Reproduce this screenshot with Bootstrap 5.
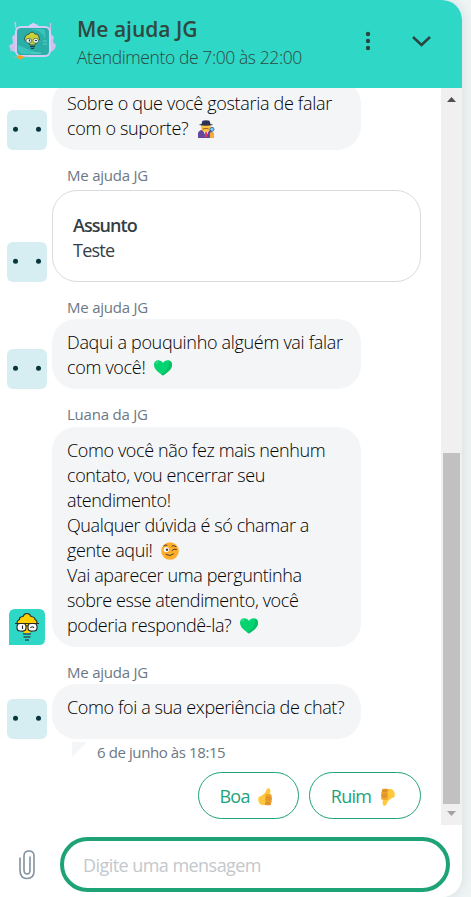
<!DOCTYPE html>
<html lang="pt-BR">
<head>
<meta charset="utf-8">
<meta name="viewport" content="width=device-width, initial-scale=1">
<title>Me ajuda JG</title>
<link href="https://cdn.jsdelivr.net/npm/bootstrap@5.3.0/dist/css/bootstrap.min.css" rel="stylesheet">
<style>
body{font-family:"Open Sans","Noto Sans",sans-serif;background:#eef3f4;height:897px;overflow:hidden;color:#000}
.chat-panel{width:462px;height:897px;background:#fff;border-radius:0 20px 20px 0;box-shadow:0 0 12px rgba(60,90,100,.13);overflow:hidden}
.chat-head{height:88px;background:#2fd7c6;color:#2f4941}
.head-logo{width:60px;height:52px;margin:14px 0 0 4px}
.head-text{width:225px;margin-left:13px;padding-top:14px}
.head-title{font-size:21px;line-height:31px;font-weight:600;letter-spacing:0;white-space:nowrap}
.head-sub{font-size:17.5px;line-height:24px;font-weight:350;letter-spacing:-.4px;white-space:nowrap}
.head-menu{width:20px;height:24px;margin:29px 0 0 56px}
.head-down{width:24px;height:24px;margin:29px 0 0 31px}
.chat-body{height:737px}
.thread{width:441px}
.msg-row{padding-left:7px;gap:5px}
.bot-face{width:40px;height:40px}
.agent-face{width:36px;height:36px;margin:0 2px 2px}
.bubble{width:309px;min-height:55px;padding:11px 0 9px 15px;border-radius:24px;background:#f4f5f7;font-size:18px;line-height:25px;font-weight:330;white-space:nowrap;letter-spacing:-.38px}
.first-row{margin-top:-8px}
.first-row .bubble,.wide-text{letter-spacing:-.32px}
.sender{padding:15px 0 2px 67px;font-size:15px;line-height:20px;font-weight:380;letter-spacing:-.22px;color:#6c7884;white-space:nowrap}
.subject{width:369px;height:92px;border:1px solid #d9dcdd;border-radius:25px;padding:22px 20px 0;margin-top:3px;font-size:18px;line-height:25px;font-weight:380;color:#343e45;letter-spacing:-.75px}
.subject .fw-semibold{letter-spacing:-.95px}
.gap-one{margin-top:1px}
.stamp{height:33px}
.stamp-tail{width:15px;height:15px;margin:3px 0 0 72px}
.stamp-time{margin:3px 0 0 10px;font-size:15px;line-height:20px;font-weight:380;color:#6c7884;letter-spacing:-.4px}
.emo{width:20px;height:20px;vertical-align:-4px;margin-left:3px}
.replies{gap:10px;padding-right:20px}
.reply-btn{height:47px;border:1px solid #1ea37a;border-radius:24px;color:#1ea37a;font-size:18px;font-weight:380;padding:2px 2px 0 0;letter-spacing:-.75px}
.reply-btn .emo{margin-left:2px}
.reply-a{width:101px}.reply-b{width:112px}
.track{width:21px;background:#f0f0f0}
.thumb{width:17px;height:351px;background:#c1c1c1;margin-left:2px}
.chat-foot{height:72px}
.clip{width:22px;height:34px;margin:23px 0 0 16px}
.msg-input{width:390px;height:55px;margin:12px 0 0 22px;border:4px solid #1ea377;border-radius:28px;padding:1px 19px 0;font-size:18px;letter-spacing:-.55px;outline:0;background:#fff}
.msg-input::placeholder{color:#c3c8cc;opacity:1}
</style>
<script src="https://cdn.jsdelivr.net/npm/bootstrap@5.3.0/dist/js/bootstrap.bundle.min.js"></script>
</head>
<body>
<svg class="d-none" aria-hidden="true">
  <symbol id="face" viewBox="0 0 40 40"><rect width="40" height="40" rx="6" fill="#d6edf1"/><circle cx="8.5" cy="19.3" r="2.5" fill="#07373c"/><circle cx="31.5" cy="19.3" r="2.5" fill="#07373c"/></symbol>
  <symbol id="heart" viewBox="0 0 20 20"><path d="M10 17.400C5 14.500 1 11 1 6.800C1 4 2.800 2.300 5.300 2.300C7.300 2.300 9 3.300 10 5C11 3.300 12.700 2.300 14.700 2.300C17.200 2.300 19 4 19 6.800C19 11 15 14.500 10 17.400Z" fill="#04d36f"/><path d="M15.500 2.400Q19 3.300 19 6.800C19 11 15 14.500 10 17.400L8 16.200C14 13 17.500 8 15.500 2.400Z" fill="#07bf67"/><path d="M3 5.500Q3.500 4 5 3.800" stroke="#3ee596" stroke-width="1.200" fill="none"/></symbol>
  <symbol id="thumb-up" viewBox="0 0 20 20"><path d="M8.300 7.500 10.700 2.500Q11.500 .8 13 1.300Q14.900 2 14.300 5.500L13.800 8.300H9Z" fill="#ffc83d"/><path d="M2.200 12Q2.200 9.500 5 9L9.700 5.500V18H6Q2.200 17 2.200 12Z" fill="#ffc83d"/><rect x="9" y="7.300" width="6.800" height="3.200" rx="1.500" fill="#f0a329"/><rect x="9" y="10" width="7" height="3.200" rx="1.500" fill="#e89a2c"/><rect x="9" y="12.700" width="6.800" height="3" rx="1.500" fill="#f0a329"/><rect x="8.800" y="15.300" width="6.300" height="3" rx="1.500" fill="#e29428"/><path d="M10 10.400H15.500M10 13H15.500M10 15.500H15" stroke="#c97f22" stroke-width=".5"/></symbol>
</svg>

<main class="chat-panel d-flex flex-column">
  <header class="chat-head d-flex align-items-start flex-shrink-0">
    <svg class="head-logo" viewBox="4 14 60 52">
      <path d="M15 34 12 37 13 43 9 46Q11 52 16 52ZM51 34 54 37 53 42 56 45Q55 51 50 52Z" fill="#cfc1ee"/>
      <path d="M13 48 10.500 51M15.500 22V27L19 31M50.500 23V34M14.500 24 16 22" stroke="#c9baf2" stroke-width="1.300" fill="none"/>
      <path d="M28 27Q29 24 32 24Q33 21 35 24Q38 24 39 27Z" fill="#d9cff5"/>
      <rect x="16" y="27" width="34" height="29" rx="5" fill="#2aaea8" stroke="#d5cdf5" stroke-width="2"/>
      <path d="M29 29Q42 29 45 39V31Q44 29 42 29ZM18 45V51Q20 54 24 54H42Q30 51 18 45Z" fill="#39c5bd"/>
      <path d="M43 41H47M43 44H47M31 53H41" stroke="#5ed0c7" stroke-width="1.200"/>
      <path d="M25 37Q26 34 29 34Q32 30 35 34Q38 33 39 37Q41 40 37 42L35 45H30L28 42Q23 41 25 37Z" fill="#c8cf38" stroke="#285f51"/>
      <rect x="26" y="38.500" width="5.500" height="4.500" rx="2" fill="#e5efea" stroke="#244b50" stroke-width=".6"/><rect x="33" y="38.500" width="5.500" height="4.500" rx="2" fill="#e5efea" stroke="#244b50" stroke-width=".6"/>
      <path d="M29.500 39.500V41.500M35 40.500H37M30 46.700H35M31 48.500H34" stroke="#183f47" stroke-width="1.200"/>
      <path d="M13 57H28" stroke="#9abdaa" stroke-width="1"/><path d="M17 56 20 55 24 57 21 59.500 18 58.500Z" fill="#ff9c16"/>
    </svg>
    <div class="head-text"><div class="head-title">Me ajuda JG</div><div class="head-sub">Atendimento de 7:00 às 22:00</div></div>
    <svg class="head-menu" viewBox="0 0 20 24" fill="#294640"><circle cx="10" cy="5" r="2.200"/><circle cx="10" cy="12" r="2.200"/><circle cx="10" cy="19" r="2.200"/></svg>
    <svg class="head-down" viewBox="0 0 24 24"><path d="M4 8 12.500 16 21 8" fill="none" stroke="#294640" stroke-width="2.500"/></svg>
  </header>

  <div class="chat-body d-flex overflow-hidden flex-shrink-0">
    <section class="thread">
      <div class="msg-row first-row d-flex align-items-end">
        <svg class="bot-face"><use href="#face"/></svg>
        <div class="bubble">Sobre o que você gostaria de falar<br>com o suporte?
          <svg class="emo" viewBox="0 0 20 20"><path d="M2 19V14Q3 11 7 10.500H13Q17 12 17 15V19Z" fill="#65489b"/><path d="M6.500 10H13.500L10 18Z" fill="#f4f1f6"/><path d="M9.300 12H10.700L11.300 18H8.800Z" fill="#e4375b"/><path d="M5 6H14.500V9Q14 13 10 13Q6 13 5 9Z" fill="#ffc43d"/><path d="M6.500 9.800Q10 8 13 9.800L12.500 10.500 10 9.800 7 10.500Z" fill="#8b5239"/><path d="M5.500 5 6.500 1.800Q10 .5 13.500 1.800L14.500 5Q17 5.300 17 6Q10 7.500 3 6Q3 5.300 5.500 5Z" fill="#2f3153"/><circle cx="16" cy="10.300" r="2" fill="#69d4f5" stroke="#38538b" stroke-width=".8"/><path d="M14 14Q16 12 18 14V19H14Z" fill="#f6ac35"/></svg>
        </div>
      </div>

      <div class="sender">Me ajuda JG</div>
      <div class="msg-row d-flex align-items-end">
        <svg class="bot-face"><use href="#face"/></svg>
        <div class="subject"><div class="fw-semibold">Assunto</div><div>Teste</div></div>
      </div>

      <div class="sender">Me ajuda JG</div>
      <div class="msg-row d-flex align-items-end">
        <svg class="bot-face"><use href="#face"/></svg>
        <div class="bubble wide-text">Daqui a pouquinho alguém vai falar<br>com você! <svg class="emo"><use href="#heart"/></svg></div>
      </div>

      <div class="sender">Luana da JG</div>
      <div class="msg-row gap-one d-flex align-items-end">
        <svg class="agent-face" viewBox="0 0 36 36">
          <path d="M0 36V6Q0 0 6 0H30Q36 0 36 6V30Q36 36 30 36Z" fill="#2fd7c6"/>
          <path d="M8.500 15Q7 12 10.500 10.500Q10 8 14 7.500Q15 4.500 18 4.500Q21 4.500 22 7.500Q26 8 26 10.500Q29 12 27.500 15L23 22H13Z" fill="#ffd000" stroke="#292b2b" stroke-width="1.100"/>
          <path d="M14 20H22L21 24H15Z" fill="#ffd000"/>
          <rect x="8" y="14.500" width="9" height="7.500" rx="3" fill="#fff" stroke="#292b2b" stroke-width="1.100"/><rect x="19" y="14.500" width="9" height="7.500" rx="3" fill="#fff" stroke="#292b2b" stroke-width="1.100"/>
          <path d="M6 14.500H30M17 17H19M13.500 16.500V20M21.500 19Q23 16.500 25 19" stroke="#292b2b" stroke-width="1.200" fill="none"/>
          <path d="M14 25H22M14.500 28H21.500M16 31H20" stroke="#31505a" stroke-width="1.400"/>
        </svg>
        <div class="bubble">Como você não fez mais nenhum<br>contato, vou encerrar seu<br>atendimento!<br>Qualquer dúvida é só chamar a<br>gente aqui!
          <svg class="emo" viewBox="0 0 20 20"><circle cx="10" cy="10" r="8.800" fill="#ffae2c"/><circle cx="6.300" cy="8.500" r="2.600" fill="#fff"/><circle cx="7" cy="8.700" r="1.200" fill="#493b39"/><path d="M3.800 4.800Q5 3.500 7 4.200M12 5Q14 4 16 5.500M12 9.500Q13.500 7 16.500 8.500M6 13.500Q10 16 13.500 13" fill="none" stroke="#543c2d" stroke-width="1" stroke-linecap="round"/></svg><br>Vai aparecer uma perguntinha<br>sobre esse atendimento, você<br>poderia respondê-la? <svg class="emo"><use href="#heart"/></svg></div>
      </div>

      <div class="sender">Me ajuda JG</div>
      <div class="msg-row d-flex align-items-end">
        <svg class="bot-face"><use href="#face"/></svg>
        <div class="bubble">Como foi a sua experiência de chat?</div>
      </div>

      <div class="stamp d-flex align-items-start">
        <svg class="stamp-tail" viewBox="0 0 15 15"><path d="M0 0H15L0 15Z" fill="#f4f5f7"/></svg>
        <div class="stamp-time">6 de junho às 18:15</div>
      </div>
      <div class="replies d-flex justify-content-end">
        <button class="btn reply-btn reply-a" type="button">Boa <svg class="emo"><use href="#thumb-up"/></svg></button>
        <button class="btn reply-btn reply-b" type="button">Ruim <svg class="emo" viewBox="0 0 20 20"><g transform="rotate(180 10 10)"><use href="#thumb-up" width="20" height="20"/></g></svg></button>
      </div>
    </section>
    <div class="track d-flex flex-column">
      <svg width="21" height="365" viewBox="0 0 21 365"><path d="M6 14H15L10.500 9Z" fill="#505050"/></svg>
      <div class="thumb flex-shrink-0"></div>
      <svg width="21" height="21" viewBox="0 0 21 21"><path d="M6 7H15L10.500 12Z" fill="#a3a3a3"/></svg>
    </div>
  </div>

  <footer class="chat-foot d-flex align-items-start flex-shrink-0">
    <svg class="clip" viewBox="0 0 22 34" fill="none" stroke="#8292a0" stroke-width="1.600" stroke-linecap="round"><path d="M4 10V22Q4 30.500 11 30.500Q18 30.500 18 23V8Q18 3 13 3Q8 3 8 8V22Q8 26 11.200 26Q14 26 14 22V9"/></svg>
    <input class="msg-input" type="text" placeholder="Digite uma mensagem" aria-label="Digite uma mensagem">
  </footer>
</main>
</body>
</html>
